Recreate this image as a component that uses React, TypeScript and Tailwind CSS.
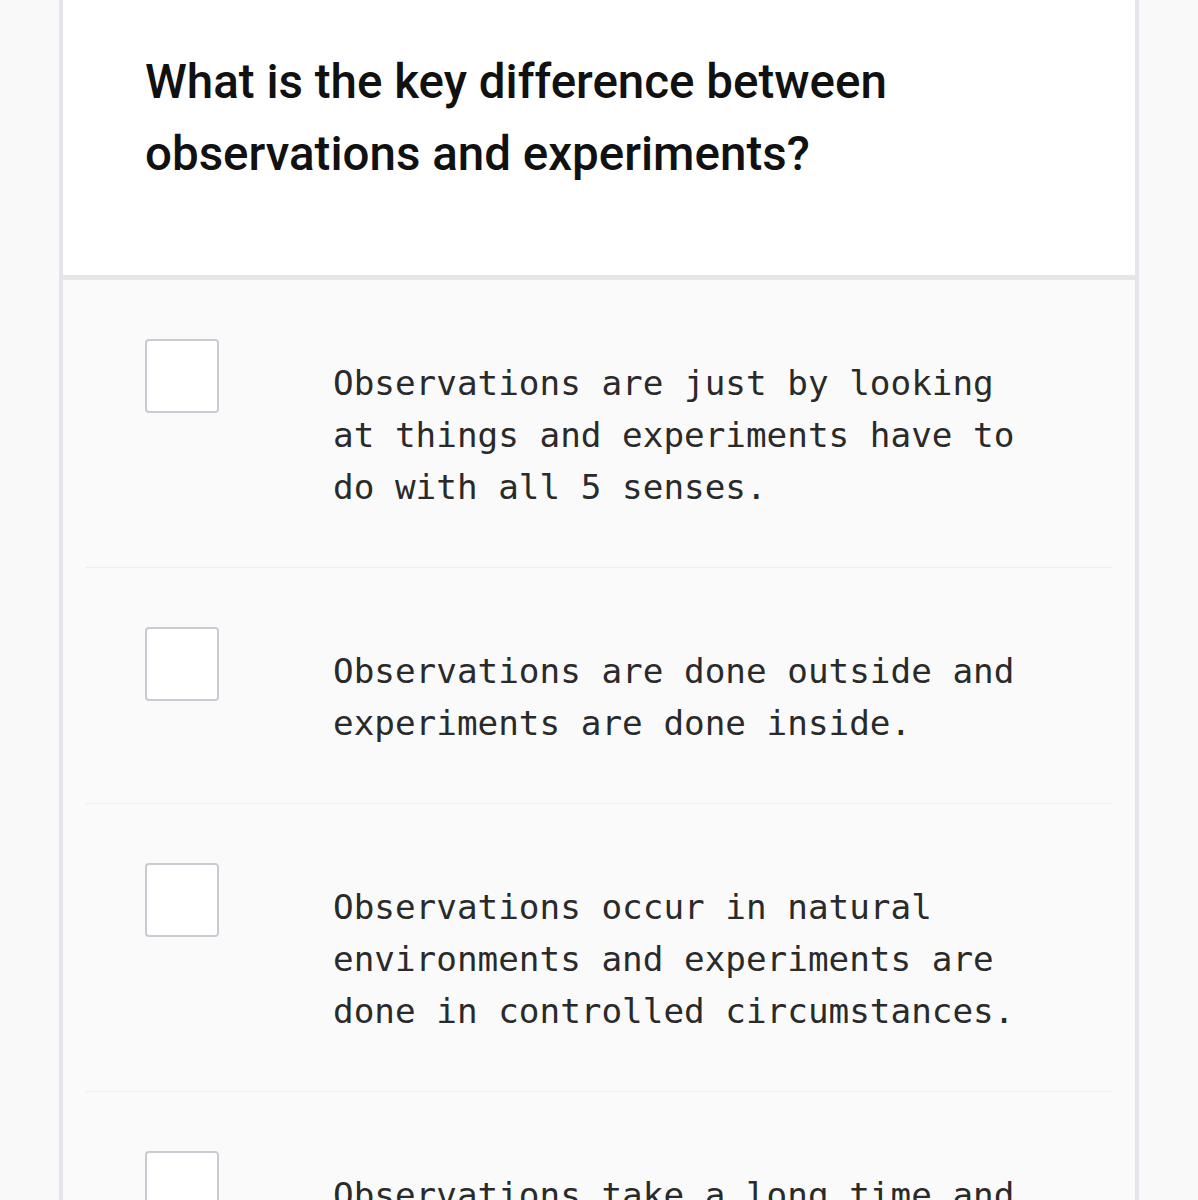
const options = [
  "Observations are just by looking at things and experiments have to do with all 5 senses.",
  "Observations are done outside and experiments are done inside.",
  "Observations occur in natural environments and experiments are done in controlled circumstances.",
  "Observations take a long time and experiments are quick.",
];

export default function App() {
  return (
    <div className="min-h-screen w-[1198px] bg-[#f9f9fa]">
      <div className="ml-[59px] w-[1080px] border-x-[4px] border-[#e4e4ea]">
        <div className="bg-white pt-[46px] pb-[85px] pl-[82px] border-b-[5px] border-[#e6e6e8]">
          <h1
            className="text-[47.5px] font-medium leading-[72px] text-[#111]"
            style={{ fontFamily: "Roboto, 'Liberation Sans', sans-serif" }}
          >
            What is the key difference between
            <br />
            observations and experiments?
          </h1>
        </div>
        <div className="bg-[#fafafa] px-[23px]">
          {options.map((text, i) => (
            <div
              key={i}
              className="flex items-start pt-[59px] pb-[54px] pl-[59px] border-b border-[#eeeeee]"
            >
              <div className="h-[74px] w-[74px] shrink-0 rounded-[4px] border-2 border-[#c8ccd2] bg-white" />
              <p
                className="ml-[114px] mt-[18px] w-[700px] text-[34.3px] leading-[52px] text-[#2a2a2a]"
                style={{ fontFamily: "'DejaVu Sans Mono', 'Liberation Mono', monospace" }}
              >
                {text}
              </p>
            </div>
          ))}
        </div>
      </div>
    </div>
  );
}
